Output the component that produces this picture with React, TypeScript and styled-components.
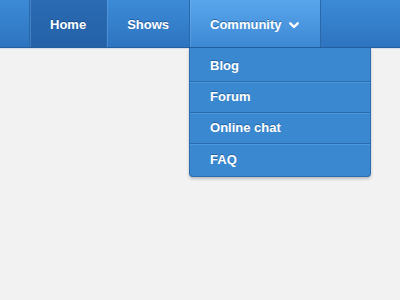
import React from "react";
import styled, { createGlobalStyle } from "styled-components";

const GlobalStyle = createGlobalStyle`
  html, body {
    margin: 0;
    padding: 0;
    background: #f2f2f2;
    font-family: "Liberation Sans", Arial, sans-serif;
  }
`;

const menuItems = ["Blog", "Forum", "Online chat", "FAQ"];

function Chevron() {
  return (
    <svg width="10" height="7" viewBox="0 0 10 7" style={{ marginLeft: 7, marginTop: 2 }}>
      <path
        d="M1.3 1.3 L5 5 L8.7 1.3"
        fill="none"
        stroke="#ffffff"
        strokeWidth="2.4"
        strokeLinecap="round"
        strokeLinejoin="round"
      />
    </svg>
  );
}

export default function App() {
  return (
    <>
      <GlobalStyle />
      <Page>
        <NavBar>
          <NavList>
            <NavItem $variant="active">Home</NavItem>
            <NavItem>Shows</NavItem>
            <DropdownHolder>
              <NavItem $variant="open">
                Community
                <Chevron />
              </NavItem>
              <Dropdown>
                {menuItems.map((item, index) => (
                  <DropdownItem
                    key={index}
                    $first={index === 0}
                    $last={index === menuItems.length - 1}
                  >
                    {item}
                  </DropdownItem>
                ))}
              </Dropdown>
            </DropdownHolder>
          </NavList>
        </NavBar>
      </Page>
    </>
  );
}

const Page = styled.div`
  width: 400px;
  height: 300px;
  background: #f2f2f2;
  overflow: hidden;
`;

const NavBar = styled.div`
  width: 100%;
  height: 48px;
  background: linear-gradient(to bottom, #3c8ad6 0%, #2e74c0 100%);
  border-bottom: 1px solid #235f9f;
  box-shadow: 0 1px 0 #d6dde6;
  padding-left: 29px;
  box-sizing: border-box;
  display: flex;
`;

const NavList = styled.div`
  display: flex;
  height: 100%;
  border-left: 1px solid #2a68ac;
  border-right: 1px solid #2a68ac;
`;

const NavItem = styled.div<{ $variant?: "active" | "open" }>`
  height: 100%;
  padding: 1px 20px 0;
  box-sizing: border-box;
  display: flex;
  align-items: center;
  color: #ffffff;
  font-size: 13px;
  font-weight: bold;
  text-shadow: 0 -1px 0 rgba(0, 40, 90, 0.45);
  border-right: 1px solid #2a68ac;
  box-shadow: inset 1px 0 0 rgba(120, 180, 240, 0.35);
  cursor: pointer;
  background: ${(p) =>
    p.$variant === "active"
      ? "linear-gradient(to bottom, #2a6bb3 0%, #2461a7 100%)"
      : p.$variant === "open"
      ? "linear-gradient(to bottom, #59a6ed 0%, #3c88d3 100%)"
      : "transparent"};
  ${(p) => (p.$variant === "open" ? "border-right: none; padding-right: 21px;" : "")}
`;

const DropdownHolder = styled.div`
  position: relative;
  height: 100%;
`;

const Dropdown = styled.div`
  position: absolute;
  top: 48px;
  left: -1px;
  width: 182px;
  background: #3a88d0;
  border: 1px solid #2b6cb1;
  border-top: none;
  border-radius: 0 0 4px 4px;
  box-shadow: 0 2px 3px rgba(0, 0, 0, 0.22);
  box-sizing: border-box;
`;

const DropdownItem = styled.div<{ $first?: boolean; $last?: boolean }>`
  height: ${(p) => (p.$first ? "34px" : p.$last ? "32px" : "31px")};
  padding-left: 20px;
  padding-top: ${(p) => (p.$first ? "1px" : "0")};
  padding-bottom: ${(p) => (p.$first ? "0" : "2px")};
  box-sizing: border-box;
  display: flex;
  align-items: center;
  color: #ffffff;
  font-size: 13px;
  font-weight: bold;
  text-shadow: 0 -1px 0 rgba(0, 40, 90, 0.4);
  border-top: ${(p) => (p.$first ? "none" : "1px solid #4b98dc")};
  border-bottom: ${(p) => (p.$last ? "none" : "1px solid #2a6aae")};
`;
